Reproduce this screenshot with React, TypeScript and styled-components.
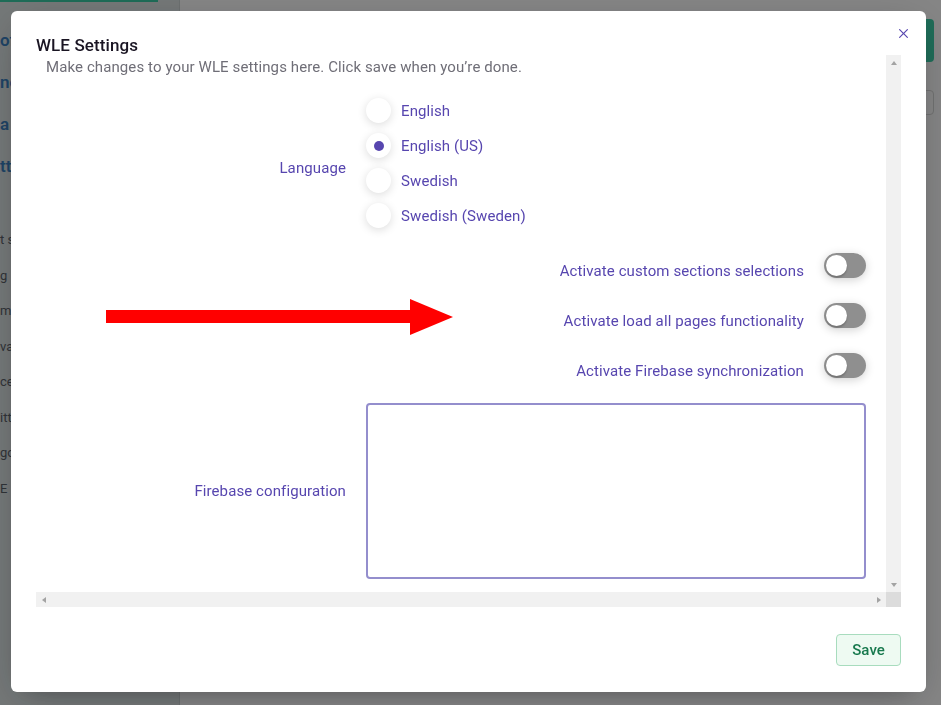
import React from "react";
import styled, { createGlobalStyle, css } from "styled-components";

const GlobalStyle = createGlobalStyle`
  html, body { margin: 0; padding: 0; height: 100%; }
  body { font-family: Roboto, "Liberation Sans", sans-serif; background: #fff; overflow: hidden; }
  * { box-sizing: border-box; }
`;

const Page = styled.div`
  display: flex;
  width: 941px;
  height: 705px;
`;

const Sidebar = styled.aside`
  width: 180px;
  flex: none;
  background: #dfe6e6;
  border-right: 1px solid #cfd6d6;
  display: flex;
  flex-direction: column;
  overflow: hidden;
`;

const Brand = styled.div`
  width: 158px;
  height: 2px;
  flex: none;
  background: #3bcfa8;
`;

const NavGroup = styled.nav<{ $top: number }>`
  display: flex;
  flex-direction: column;
  align-items: flex-start;
  padding-top: ${(p) => p.$top}px;
`;

const NavItem = styled.div<{ $major?: boolean }>`
  white-space: nowrap;
  font-size: ${(p) => (p.$major ? 17 : 13)}px;
  font-weight: ${(p) => (p.$major ? 600 : 400)};
  line-height: ${(p) => (p.$major ? 42 : 35.5)}px;
  color: ${(p) => (p.$major ? "#3a7fc0" : "#5b6169")};
`;

const Main = styled.main`
  flex: 1;
  display: flex;
  flex-direction: column;
  align-items: flex-end;
  padding: 19px 7px 0 0;
  gap: 28px;
`;

const HeaderButton = styled.div`
  width: 90px;
  height: 43px;
  border-radius: 4px;
  background: #3bcfa8;
`;

const HeaderSelect = styled.div`
  width: 90px;
  height: 25px;
  border-radius: 4px;
  border: 1px solid #d8d8d8;
  background: #fff;
`;

const Overlay = styled.div`
  position: fixed;
  inset: 0;
  background: rgba(0, 0, 0, 0.48);
`;

const Dialog = styled.div`
  position: fixed;
  left: 11px;
  top: 11px;
  width: 915px;
  height: 681px;
  background: #fff;
  border-radius: 6px;
  padding: 25px;
  display: flex;
  flex-direction: column;
  letter-spacing: 0.1px;
  box-shadow: rgba(14, 18, 22, 0.35) 0px 10px 38px -10px,
    rgba(14, 18, 22, 0.2) 0px 10px 20px -15px;
`;

const Title = styled.h2`
  margin: 0;
  font-size: 17px;
  font-weight: 500;
  line-height: 19px;
  color: #1a1523;
`;

const CloseButton = styled.button`
  position: absolute;
  top: 10px;
  right: 10px;
  width: 25px;
  height: 25px;
  border: none;
  padding: 0;
  border-radius: 50%;
  background: transparent;
  color: #5746af;
  display: inline-flex;
  align-items: center;
  justify-content: center;
`;

/* Scroll frame with classic scrollbars */
const ScrollFrame = styled.div`
  flex: none;
  height: 552px;
  display: grid;
  grid-template-columns: 1fr 15px;
  grid-template-rows: 1fr 15px;
`;

const Viewport = styled.div`
  overflow: hidden;
`;

const Scrollbar = styled.div<{ $vertical?: boolean }>`
  background: #f1f1f1;
  display: flex;
  flex-direction: ${(p) => (p.$vertical ? "column" : "row")};
  justify-content: space-between;
`;

const ScrollCorner = styled.div`
  background: #dcdcdc;
`;

const ScrollButton = styled.span`
  width: 15px;
  height: 15px;
  display: flex;
  align-items: center;
  justify-content: center;
`;

type Dir = "up" | "down" | "left" | "right";
const ArrowGlyph = styled.span<{ $dir: Dir }>`
  width: 0;
  height: 0;
  border-style: solid;
  border-color: transparent;
  ${(p) =>
    p.$dir === "up"
      ? css`
          border-width: 0 3.5px 4px;
          border-bottom-color: #a3a3a3;
          margin-top: 1px;
        `
      : p.$dir === "down"
      ? css`
          border-width: 4px 3.5px 0;
          border-top-color: #a3a3a3;
        `
      : p.$dir === "left"
      ? css`
          border-width: 3.5px 4px 3.5px 0;
          border-right-color: #a3a3a3;
        `
      : css`
          border-width: 3.5px 0 3.5px 4px;
          border-left-color: #a3a3a3;
        `}
`;

const Content = styled.div`
  position: relative;
  padding: 2px 20px 14px 0;
`;

const Description = styled.p`
  margin: 0 0 16px 10px;
  font-size: 15px;
  line-height: 20px;
  color: #6f6e77;
`;

const Form = styled.div`
  display: grid;
  grid-template-columns: 310px 500px;
  column-gap: 20px;
  align-items: center;
`;

const FieldLabel = styled.label<{ $shift?: number }>`
  text-align: right;
  font-size: 15px;
  color: #5746af;
  padding-top: ${(p) => p.$shift ?? 0}px;
`;

const RadioGroup = styled.div`
  display: flex;
  flex-direction: column;
  padding-bottom: 7px;
`;

const RadioItem = styled.label`
  display: flex;
  align-items: center;
  gap: 10px;
  height: 35px;
  font-size: 15px;
  color: #5746af;
`;

const RadioCircle = styled.span`
  width: 25px;
  height: 25px;
  border-radius: 50%;
  background: #fff;
  box-shadow: 0 2px 10px rgba(0, 0, 0, 0.14);
  display: flex;
  align-items: center;
  justify-content: center;
`;

const RadioDot = styled.span`
  width: 10px;
  height: 10px;
  border-radius: 50%;
  background: #5746af;
`;

const SwitchRow = styled.div`
  grid-column: 1 / -1;
  display: flex;
  justify-content: flex-end;
  align-items: center;
  gap: 20px;
  height: 50px;
`;

const SwitchLabel = styled.label`
  font-size: 15px;
  color: #5746af;
  padding-top: 12px;
`;

const SwitchTrack = styled.span`
  width: 42px;
  height: 25px;
  border-radius: 9999px;
  background: rgba(0, 0, 0, 0.44);
  box-shadow: 0 2px 10px rgba(0, 0, 0, 0.18);
  padding: 2px;
  display: flex;
  align-items: center;
`;

const SwitchThumb = styled.span`
  width: 21px;
  height: 21px;
  border-radius: 50%;
  background: #fff;
  box-shadow: 0 2px 2px rgba(0, 0, 0, 0.2);
`;

const TextArea = styled.textarea`
  margin-top: 13px;
  width: 500px;
  height: 176px;
  border: 2px solid #948ecd;
  border-radius: 4px;
  resize: none;
  font-family: inherit;
  font-size: 15px;
  outline: none;
`;

const Footer = styled.div`
  display: flex;
  justify-content: flex-end;
  padding-top: 27px;
`;

const SaveButton = styled.button`
  height: 32px;
  padding: 0 15px;
  border-radius: 4px;
  border: 1px solid #a8dcbe;
  background: #eefaf2;
  color: #18794e;
  font-family: inherit;
  font-size: 15px;
  font-weight: 500;
  letter-spacing: 0.1px;
`;

const Annotation = styled.svg`
  position: absolute;
  left: 70px;
  top: 244px;
`;

const languages = ["English", "English (US)", "Swedish", "Swedish (Sweden)"];
const switches = [
  "Activate custom sections selections",
  "Activate load all pages functionality",
  "Activate Firebase synchronization",
];
const majorNav = ["of", "nc", "a", "tt"];
const minorNav = ["t s", "g", "m", "va", "ce", "itt", "go", "E"];

export default function App() {
  return (
    <>
      <GlobalStyle />
      <Page>
        <Sidebar>
          <Brand />
          <NavGroup $top={17}>
            {majorNav.map((n) => (
              <NavItem key={n} $major>
                {n}
              </NavItem>
            ))}
          </NavGroup>
          <NavGroup $top={35}>
            {minorNav.map((n) => (
              <NavItem key={n}>{n}</NavItem>
            ))}
          </NavGroup>
        </Sidebar>
        <Main>
          <HeaderButton />
          <HeaderSelect />
        </Main>
      </Page>
      <Overlay />
      <Dialog role="dialog">
        <Title>WLE Settings</Title>
        <CloseButton aria-label="Close">
          <svg width="15" height="15" viewBox="0 0 15 15" fill="none">
            <path
              d="M11.7816 4.03157C12.0062 3.80702 12.0062 3.44295 11.7816 3.2184C11.5571 2.99385 11.193 2.99385 10.9685 3.2184L7.50005 6.68682L4.03164 3.2184C3.80708 2.99385 3.44301 2.99385 3.21846 3.2184C2.99391 3.44295 2.99391 3.80702 3.21846 4.03157L6.68688 7.49999L3.21846 10.9684C2.99391 11.193 2.99391 11.557 3.21846 11.7816C3.44301 12.0061 3.80708 12.0061 4.03164 11.7816L7.50005 8.31316L10.9685 11.7816C11.193 12.0061 11.5571 12.0061 11.7816 11.7816C12.0062 11.557 12.0062 11.193 11.7816 10.9684L8.31322 7.49999L11.7816 4.03157Z"
              fill="currentColor"
            />
          </svg>
        </CloseButton>
        <ScrollFrame>
          <Viewport>
            <Content>
              <Description>
                Make changes to your WLE settings here. Click save when you’re done.
              </Description>
              <Form>
                <FieldLabel $shift={2}>Language</FieldLabel>
                <RadioGroup>
                  {languages.map((l) => (
                    <RadioItem key={l}>
                      <RadioCircle>{l === "English (US)" && <RadioDot />}</RadioCircle>
                      {l}
                    </RadioItem>
                  ))}
                </RadioGroup>
                {switches.map((s) => (
                  <SwitchRow key={s}>
                    <SwitchLabel>{s}</SwitchLabel>
                    <SwitchTrack>
                      <SwitchThumb />
                    </SwitchTrack>
                  </SwitchRow>
                ))}
                <FieldLabel $shift={13}>Firebase configuration</FieldLabel>
                <TextArea />
              </Form>
              <Annotation width="348" height="37" viewBox="0 0 348 37">
                <rect x="0" y="11" width="305" height="13" fill="#ff0000" />
                <polygon points="304,0 347,18 304,36" fill="#ff0000" />
              </Annotation>
            </Content>
          </Viewport>
          <Scrollbar $vertical>
            <ScrollButton>
              <ArrowGlyph $dir="up" />
            </ScrollButton>
            <ScrollButton>
              <ArrowGlyph $dir="down" />
            </ScrollButton>
          </Scrollbar>
          <Scrollbar>
            <ScrollButton>
              <ArrowGlyph $dir="left" />
            </ScrollButton>
            <ScrollButton>
              <ArrowGlyph $dir="right" />
            </ScrollButton>
          </Scrollbar>
          <ScrollCorner />
        </ScrollFrame>
        <Footer>
          <SaveButton>Save</SaveButton>
        </Footer>
      </Dialog>
    </>
  );
}
